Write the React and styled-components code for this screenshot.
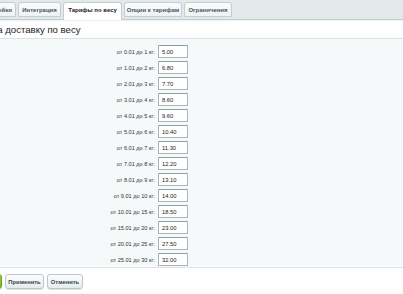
import React from "react";
import styled, { createGlobalStyle } from "styled-components";

const Global = createGlobalStyle`
  html, body { margin: 0; padding: 0; background: #ffffff; overflow: hidden; }
  body { font-family: "Liberation Sans", Arial, sans-serif; }
`;

const Page = styled.div`
  width: 403px;
  height: 294px;
  display: flex;
  flex-direction: column;
  overflow: hidden;
`;

const TabBar = styled.div`
  height: 19px;
  flex: none;
  background: #e1e9eb;
  border-bottom: 1px solid #c3ccd0;
  box-shadow: 0 1px 1px rgba(0,0,0,0.06);
  display: flex;
  align-items: flex-end;
  gap: 2px;
  margin-left: -24px;
  position: relative;
  z-index: 1;
`;

const Tab = styled.div`
  flex: none;
  box-sizing: border-box;
  width: ${p => p.$w}px;
  height: ${p => (p.$active ? 18 : 15)}px;
  margin-bottom: ${p => (p.$active ? -1 : 2)}px;
  background: ${p => (p.$active ? "#ffffff" : "linear-gradient(#fbfcfc, #eef2f3)")};
  border: 1px solid #c4cdd1;
  border-bottom: ${p => (p.$active ? "none" : "1px solid #c4cdd1")};
  border-radius: 3px 3px 0 0;
  display: flex;
  align-items: center;
  justify-content: center;
  padding-bottom: ${p => (p.$active ? 3 : 0)}px;
  font-size: 6px;
  font-weight: bold;
  color: ${p => (p.$active ? "#222" : "#4a555c")};
  white-space: nowrap;
`;

const Title = styled.div`
  height: 18px;
  flex: none;
  background: #ffffff;
  border-bottom: 1px solid #dbe2e5;
  display: flex;
  align-items: center;
  margin-left: -47px;
  font-size: 9.6px;
  color: #222;
  white-space: nowrap;
`;

const Content = styled.div`
  flex: none;
  height: 229px;
  box-sizing: border-box;
  background: #f5f9f9;
  padding-top: 6px;
  border-bottom: 1px solid #dfe5e7;
  box-shadow: 0 1px 2px rgba(0,0,0,0.05);
`;

const Grid = styled.div`
  display: grid;
  grid-template-columns: 155px 30px;
  grid-auto-rows: 13px;
  column-gap: 3px;
  row-gap: 3px;
`;

const Label = styled.div`
  display: flex;
  align-items: center;
  justify-content: flex-end;
  font-size: 5.6px;
  color: #333;
  white-space: nowrap;
`;

const Input = styled.div`
  box-sizing: border-box;
  height: 13px;
  background: #ffffff;
  border: 1px solid #a9b5b9;
  border-top-color: #8f9ca1;
  border-radius: 1px;
  display: flex;
  align-items: center;
  padding-left: 3px;
  font-size: 5.8px;
  color: #222;
`;

const Footer = styled.div`
  flex: 1;
  background: #ffffff;
  display: flex;
  align-items: flex-start;
  gap: 3px;
  padding-top: 6px;
  margin-left: -37px;
`;

const Button = styled.div`
  box-sizing: border-box;
  height: 15px;
  width: ${p => p.$w}px;
  border-radius: 3px;
  border: 1px solid ${p => (p.$green ? "#6d9e1d" : "#bcc6c9")};
  background: ${p => (p.$green ? "linear-gradient(#9fcf3e, #7fb320)" : "linear-gradient(#fdfefe, #e5ebec)")};
  box-shadow: 0 1px 1px rgba(0,0,0,0.12);
  display: flex;
  align-items: center;
  justify-content: center;
  font-size: 5.8px;
  font-weight: bold;
  color: ${p => (p.$green ? "#fff" : "#3a4449")};
  white-space: nowrap;
`;

const rows = [
  ["от 0.01 до 1 кг:", "5.00"],
  ["от 1.01 до 2 кг:", "6.80"],
  ["от 2.01 до 3 кг:", "7.70"],
  ["от 3.01 до 4 кг:", "8.60"],
  ["от 4.01 до 5 кг:", "9.60"],
  ["от 5.01 до 6 кг:", "10.40"],
  ["от 6.01 до 7 кг:", "11.30"],
  ["от 7.01 до 8 кг:", "12.20"],
  ["от 8.01 до 9 кг:", "13.10"],
  ["от 9.01 до 10 кг:", "14.00"],
  ["от 10.01 до 15 кг:", "18.50"],
  ["от 15.01 до 20 кг:", "23.00"],
  ["от 20.01 до 25 кг:", "27.50"],
  ["от 25.01 до 30 кг:", "32.00"],
];

export default function App() {
  return (
    <Page>
      <Global />
      <TabBar>
        <Tab $w={40}>Настройки</Tab>
        <Tab $w={43}>Интеграция</Tab>
        <Tab $w={59} $active>Тарифы по весу</Tab>
        <Tab $w={58}>Опции к тарифам</Tab>
        <Tab $w={48}>Ограничения</Tab>
      </TabBar>
      <Title>Тарифы на доставку по весу</Title>
      <Content>
        <Grid>
          {rows.map(([l, v]) => (
            <React.Fragment key={l}>
              <Label>{l}</Label>
              <Input>{v}</Input>
            </React.Fragment>
          ))}
        </Grid>
      </Content>
      <Footer>
        <Button $green $w={39}>Сохранить</Button>
        <Button $w={39}>Применить</Button>
        <Button $w={36}>Отменить</Button>
      </Footer>
    </Page>
  );
}
